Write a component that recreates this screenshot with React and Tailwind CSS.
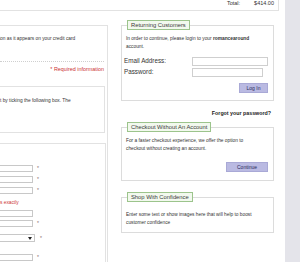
export default function App() {
  return (
    <div className="w-[300px] h-[262px] overflow-hidden flex bg-white font-['Liberation_Sans',Arial,sans-serif] text-[#333]">
      <div className="w-[285px] shrink-0 flex flex-col">
        {/* order total */}
        <div className="w-[279px] h-[11px] shrink-0 border-b border-r border-[#e2e2e2] flex items-center justify-end pr-[4px] pb-[2px] text-[5.5px] leading-none">
          <span className="mr-[14px]">Total:</span>
          <span>$414.00</span>
        </div>

        <div className="flex items-start mt-[9px]">
          {/* billing column (cropped on the left) */}
          <div className="w-[108px] h-[240px] mt-[5px] border-t border-r border-[#e2e2e2] flex flex-col">
            <p className="mt-[10px] -ml-[1px] text-[4.8px] leading-[6px] whitespace-nowrap">
              ion as it appears on your credit card
            </p>
            <div className="mt-[19px] w-[104px] border-t border-dotted border-[#cfcfcf]" />
            <p className="mt-[4px] w-[104px] text-right text-[5.4px] leading-[7px] text-[#cc3333]">
              * Required information
            </p>
            <div className="mt-[13px] w-[105px] h-[47px] shrink-0 border-t border-r border-b border-[#e2e2e2]">
              <p className="pt-[11px] text-[4.8px] leading-[6px] whitespace-nowrap">
                t by ticking the following box. The
              </p>
            </div>
            <div className="mt-[10px] w-[106px] flex-1 border-t border-r border-[#e2e2e2] pt-[21px] flex flex-col">
              <Field star />
              <Field star className="mt-[4px]" />
              <Field star className="mt-[4px]" />
              <p className="mt-[6px] text-[4.8px] leading-[6px] text-[#cc3333]">s exactly</p>
              <Field className="mt-[4px]" />
              <Field star className="mt-[3px]" />
              <div className="mt-[7px] flex items-center">
                <div className="-ml-[2px] w-[37px] h-[8px] border border-[#c8c8c8] flex items-center justify-end pr-[2px]">
                  <svg width="4" height="3" viewBox="0 0 4 3">
                    <path d="M0 0h4L2 3z" fill="#222" />
                  </svg>
                </div>
                <span className="ml-[5px] text-[5px] leading-none text-[#8a6a6a]">*</span>
              </div>
              <Field star className="mt-[12px]" />
            </div>
          </div>

          {/* login column */}
          <div className="ml-[13px] w-[153px] flex flex-col">
            <fieldset className="border border-[#dcdcdc] pr-[5px] pb-[7px]">
              <Legend>Returning Customers</Legend>
              <p className="mt-[5px] pl-[4px] text-[4.8px] leading-[8px] whitespace-nowrap">
                In order to continue, please login to your <b>romancearound</b>
                <br />
                account.
              </p>
              <div className="mt-[6px] flex items-center">
                <span className="w-[70px] pl-[2px] text-[6.3px] leading-none">Email Address:</span>
                <div className="w-[76px] h-[9px] border border-[#cfcfcf]" />
              </div>
              <div className="mt-[2px] flex items-center">
                <span className="w-[70px] pl-[2px] text-[6.3px] leading-none">Password:</span>
                <div className="w-[71px] h-[9px] border border-[#cfcfcf]" />
              </div>
              <div className="mt-[6px] flex justify-end">
                <Button className="w-[29px]">Log In</Button>
              </div>
            </fieldset>

            <p className="mt-[9px] pr-[3px] text-right font-bold text-[5.3px] leading-[7px] text-[#222]">
              Forgot your password?
            </p>

            <fieldset className="mt-[5px] border border-[#dcdcdc] pr-[5px] pb-[8px]">
              <Legend>Checkout Without An Account</Legend>
              <p className="mt-[5px] pl-[4px] text-[4.8px] leading-[8px] whitespace-nowrap">
                For a faster checkout experience, we offer the option to
                <br />
                checkout without creating an account.
              </p>
              <div className="mt-[9px] flex justify-end">
                <Button className="w-[42px]">Continue</Button>
              </div>
            </fieldset>

            <fieldset className="mt-[11px] border border-[#dcdcdc] pr-[5px] pb-[5px]">
              <Legend>Shop With Confidence</Legend>
              <p className="mt-[9px] pl-[4px] text-[4.8px] leading-[8px] whitespace-nowrap">
                Enter some text or show images here that will help to boost
                <br />
                customer confidence
              </p>
            </fieldset>
          </div>
        </div>
      </div>
      <div className="flex-1 bg-[#e4e4ea]" />
    </div>
  );
}

function Field({ star, className = "" }) {
  return (
    <div className={"flex items-center " + className}>
      <div className="-ml-[2px] w-[35px] h-[7px] border border-[#c8c8c8]" />
      {star && <span className="ml-[4px] text-[5px] leading-none text-[#8a6a6a]">*</span>}
    </div>
  );
}

function Legend({ children }) {
  return (
    <legend className="ml-[5px] h-[10px] px-[3px] border border-[#9cc48c] bg-[#f2f9ee] text-[5.8px] leading-[8px] text-[#3a3a3a]">
      {children}
    </legend>
  );
}

function Button({ children, className = "" }) {
  return (
    <div className={"h-[10px] bg-[#babae2] border border-[#a9a9d6] flex items-center justify-center text-[5px] leading-none text-[#2a2a5a] " + className}>
      {children}
    </div>
  );
}
